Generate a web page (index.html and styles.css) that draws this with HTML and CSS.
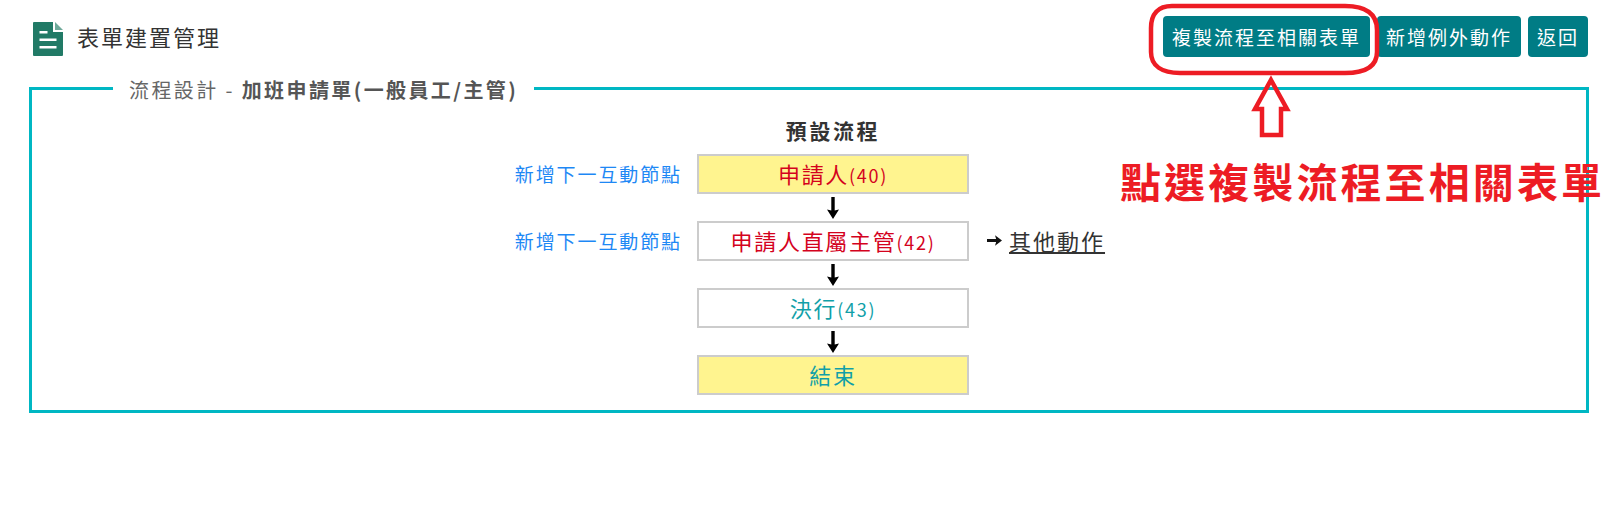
FILE: index.html
```html
<!DOCTYPE html>
<html lang="zh-Hant">
<head>
<meta charset="utf-8">
<title>表單建置管理</title>
<link rel="stylesheet" href="styles.css">
</head>
<body>
<header class="topbar">
  <div class="title">
    <svg class="doc-icon" viewBox="0 0 30 34" aria-hidden="true">
      <path fill="#217a66" d="M0 1a1 1 0 0 1 1-1h19v10h10v23a1 1 0 0 1-1 1H1a1 1 0 0 1-1-1z"/>
      <path fill="#6fa99a" d="M22 0l8 8h-8z"/>
      <path fill="#fff" d="M6.500 9h8v2.500h-8zM6.500 16.500h17V19h-17zM6.500 24h17v2.500h-17z"/>
    </svg>
    <h1>表單建置管理</h1>
  </div>
  <nav class="actions">
    <button class="btn">複製流程至相關表單</button>
    <button class="btn">新增例外動作</button>
    <button class="btn">返回</button>
  </nav>
</header>

<fieldset class="panel">
  <legend class="panel-legend">流程設計 - <b>加班申請單(一般員工/主管)</b></legend>
  <div class="flow">
    <div class="flow-title">預設流程</div>

    <a class="add-link">新增下一互動節點</a>
    <div class="node node-yellow node-red">申請人<small>(40)</small></div>

    <div class="arrow-cell"><svg class="down" viewBox="0 0 12 22"><path d="M4.300 0h3.400v13.500L12 12.500 6 22 0 12.500l4.300 1z"/></svg></div>

    <a class="add-link">新增下一互動節點</a>
    <div class="node node-red">申請人直屬主管<small>(42)</small></div>
    <div class="other"><svg class="right" viewBox="0 0 14 10"><path d="M0 3.500h8.500L7.500 0 14 5 7.500 10l1-3.500H0z"/></svg><a class="other-link">其他動作</a></div>

    <div class="arrow-cell"><svg class="down" viewBox="0 0 12 22"><path d="M4.300 0h3.400v13.500L12 12.500 6 22 0 12.500l4.300 1z"/></svg></div>

    <div class="node node-teal">決行<small>(43)</small></div>

    <div class="arrow-cell"><svg class="down" viewBox="0 0 12 22"><path d="M4.300 0h3.400v13.500L12 12.500 6 22 0 12.500l4.300 1z"/></svg></div>

    <div class="node node-yellow node-teal">結束</div>
  </div>
</fieldset>

<svg class="callout" viewBox="0 0 1618 522" aria-hidden="true">
  <path d="M1172 6H1345C1366 6 1377 14 1377 30V52C1377 66 1366 73 1345 73H1180C1162 73 1151 66 1151 52V28C1151 14 1158 6 1172 6Z"/>
  <path d="M1271 80L1287 109H1281V135H1262V109H1255Z"/>
</svg>
<div class="callout-text">點選複製流程至相關表單</div>
</body>
</html>
```

FILE: styles.css
```css
* { box-sizing: border-box; }
html, body { margin: 0; padding: 0; }
body {
  position: relative;
  width: 1618px;
  height: 522px;
  overflow: hidden;
  background: #fff;
  font-family: "Noto Sans CJK TC", "Noto Sans", sans-serif;
  color: #333;
}
.topbar {
  display: flex;
  justify-content: space-between;
  align-items: flex-start;
  padding: 16px 30px 0 33px;
  height: 74px;
}
.title { display: flex; align-items: center; gap: 14px; padding-top: 5px; }
.doc-icon { width: 30px; height: 34px; display: block; }
.title h1 {
  margin: 0 0 5px;
  font-size: 22px;
  font-weight: 400;
  letter-spacing: 2px;
  line-height: 30px;
  color: #333;
}
.actions { display: flex; gap: 7px; }
.btn {
  height: 41px;
  padding: 0 9px;
  border: 0;
  border-radius: 4px;
  background: #007c85;
  color: #fff;
  font: 400 19px/40px "Noto Sans CJK TC", sans-serif;
  letter-spacing: 2px;
}
.panel {
  margin: 0 29px;
  padding: 0;
  height: 339px;
  border: 3px solid #00b7c3;
  min-width: 0;
}
.panel-legend {
  margin-left: 81px;
  padding: 3px 16px 0;
  font-size: 20px;
  line-height: 26px;
  letter-spacing: 2.400px;
  color: #666;
}
.panel-legend b { color: #555; font-weight: 700; }
.flow {
  display: grid;
  grid-template-columns: 649px 272px auto;
  column-gap: 16px;
  justify-content: start;
  padding-top: 13px;
  align-items: center;
}
.flow-title {
  grid-column: 2;
  text-align: center;
  font-size: 21px;
  line-height: 28px;
  font-weight: 700;
  letter-spacing: 2.600px;
  color: #333;
  margin-bottom: 10px;
}
.add-link {
  grid-column: 1;
  text-align: right;
  font-size: 19px;
  letter-spacing: 1.900px;
  color: #1e88f5;
  line-height: 26px;
  margin-right: -1px;
}
.node {
  grid-column: 2;
  height: 40px;
  border: 2px solid #ccc;
  background: #fff;
  text-align: center;
  font-size: 22px;
  line-height: 34px;
  letter-spacing: 1.700px;
}
.node small { font-size: 18px; }
.node-yellow { background: #fff48f; }
.node-red { color: #d4021d; }
.node-teal { color: #119fa8; }
.arrow-cell {
  grid-column: 2;
  height: 27px;
  display: flex;
  align-items: center;
  justify-content: center;
}
.down { width: 12px; height: 22px; display: block; fill: #000; }
.other { grid-column: 3; display: flex; align-items: center; gap: 7px; margin: 0 0 2px 2px; }
.right { width: 15px; height: 11px; display: block; fill: #111; }
.other-link {
  font-size: 22px;
  line-height: 30px;
  letter-spacing: 2px;
  color: #333;
  text-decoration: underline;
}
.callout {
  position: absolute;
  left: 0;
  top: 0;
  width: 1618px;
  height: 522px;
  fill: none;
  stroke: #ed1c24;
  stroke-width: 4.500;
  pointer-events: none;
}
.callout-text {
  position: absolute;
  left: 1120px;
  top: 152px;
  font-size: 41px;
  line-height: 56px;
  font-weight: 700;
  letter-spacing: 3.100px;
  color: #ed1c24;
  white-space: nowrap;
}
```
